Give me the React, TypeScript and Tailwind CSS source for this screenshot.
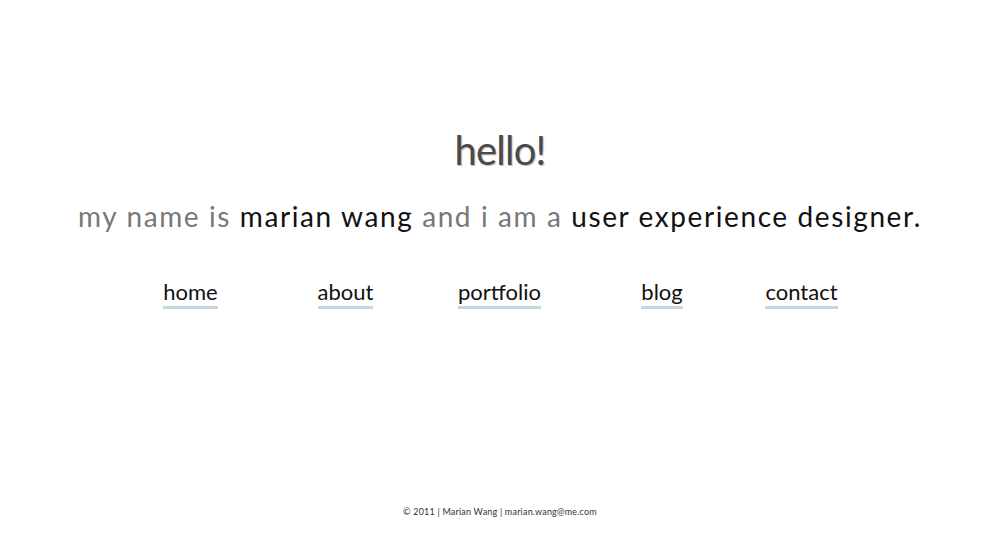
import React from 'react';

const navItems = [
  { label: 'home', cell: 'w-[155px]' },
  { label: 'about', cell: 'w-[155px]' },
  { label: 'portfolio', cell: 'w-[153px]' },
  { label: 'blog', cell: 'w-[172px]' },
  { label: 'contact', cell: 'w-[107px]' },
];

export default function App() {
  return (
    <div className="w-full h-[558px] bg-white flex flex-col items-center font-['Lato',sans-serif]">
      {/* 見出し */}
      <h1 className="mt-[124px] text-[40px] leading-[52px] text-[#4a4a4a] [text-shadow:1px_1px_1px_#bbb] tracking-[-0.8px]">
        hello!
      </h1>
      <p className="mt-[20px] text-[28px] leading-[40px] tracking-[1.6px] text-[#777]">
        my name is <span className="text-[#111]">marian wang</span> and i am a{' '}
        <span className="text-[#111]">user experience designer.</span>
      </p>

      {/* ナビ */}
      <nav className="mt-[43px] flex pr-[32px]">
        {navItems.map((item) => (
          <div key={item.label} className={`${item.cell} flex justify-center`}>
            <a href="#" className="text-[22px] leading-[26px] text-[#111] border-b-[3px] border-[#c6d6e0] pb-[1px]">
              {item.label}
            </a>
          </div>
        ))}
      </nav>

      <footer className="mt-auto mb-[40px] text-[9px] tracking-[0.2px] text-[#333]">
        © 2011 | Marian Wang | marian.wang@me.com
      </footer>
    </div>
  );
}
